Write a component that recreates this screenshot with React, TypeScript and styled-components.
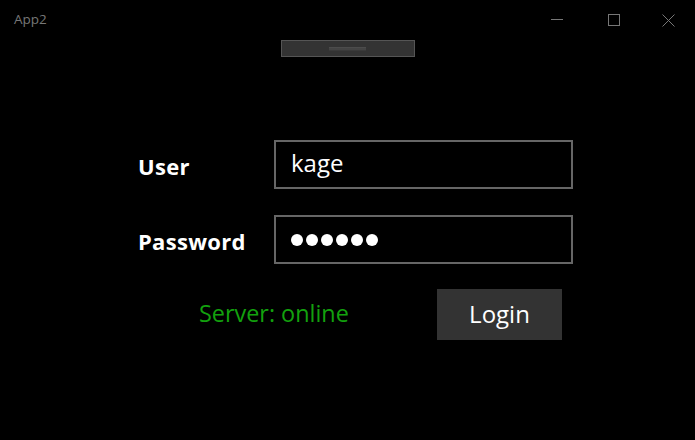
import React from "react";
import styled, { createGlobalStyle } from "styled-components";

const Global = createGlobalStyle`
  html, body { margin: 0; padding: 0; background: #000; }
  body { font-family: "Open Sans", "Noto Sans", sans-serif; }
`;

const Window = styled.div`
  width: 695px;
  height: 440px;
  background: #000;
  display: flex;
  flex-direction: column;
  overflow: hidden;
`;

const TitleBar = styled.div`
  height: 40px;
  display: flex;
  align-items: center;
  padding-left: 14px;
`;

const Title = styled.div`
  flex: 1;
  color: #777;
  font-size: 13.5px;
  line-height: 1;
`;

const Controls = styled.div`
  display: flex;
  align-self: stretch;
`;

const ControlButton = styled.div`
  width: 57px;
  display: flex;
  align-items: center;
  justify-content: center;
  &:last-child {
    width: 53px;
  }
`;

const HandleRow = styled.div`
  display: flex;
  justify-content: center;
`;

const Handle = styled.div`
  width: 132px;
  height: 15px;
  border: 1px solid #555;
  background: #333;
  display: flex;
  align-items: center;
  justify-content: center;
`;

const Grip = styled.div`
  width: 37px;
  height: 2px;
  background: #444;
  border-top: 1px solid #4c4c4c;
  border-bottom: 1px solid #3a3a3a;
`;

const Form = styled.div`
  margin-top: 83px;
  margin-left: 138px;
  display: grid;
  grid-template-columns: 136px 299px;
  row-gap: 26px;
  align-items: center;
`;

const Label = styled.label`
  color: #fff;
  font-weight: 700;
  font-size: 22px;
  letter-spacing: 0.3px;
  line-height: 1;
  margin-top: 2px;
`;

const Field = styled.div`
  box-sizing: border-box;
  height: 49px;
  border: 2px solid #666;
  padding-left: 15px;
  display: flex;
  align-items: center;
  color: #fff;
  font-size: 24px;
  line-height: 1;
  padding-bottom: 3px;
`;

const Dots = styled.span`
  display: flex;
  gap: 3px;
  padding-top: 3px;
`;

const Dot = styled.span`
  width: 12px;
  height: 12px;
  border-radius: 50%;
  background: #fff;
`;

const Footer = styled.div`
  margin-top: 25px;
  margin-left: 199px;
  display: flex;
  align-items: center;
`;

const Status = styled.div`
  width: 238px;
  color: #13a10e;
  font-size: 23.4px;
  line-height: 1;
  padding-bottom: 2px;
`;

const LoginButton = styled.button`
  box-sizing: border-box;
  width: 125px;
  height: 51px;
  border: none;
  background: #333;
  color: #fff;
  font-family: inherit;
  font-size: 24px;
  padding: 0 0 3px;
  cursor: pointer;
`;

export default function App() {
  return (
    <>
      <Global />
      <Window>
        <TitleBar>
          <Title>App2</Title>
          <Controls>
            <ControlButton>
              <svg width="12" height="12" viewBox="0 0 12 12">
                <line x1="0" y1="5.5" x2="12" y2="5.5" stroke="#777" strokeWidth="1" />
              </svg>
            </ControlButton>
            <ControlButton>
              <svg width="12" height="12" viewBox="0 0 12 12">
                <rect x="0.5" y="0.5" width="11" height="11" fill="none" stroke="#777" strokeWidth="1" />
              </svg>
            </ControlButton>
            <ControlButton>
              <svg width="13" height="13" viewBox="0 0 13 13">
                <path d="M0.5 0.5 L12.5 12.5 M12.5 0.5 L0.5 12.5" stroke="#777" strokeWidth="1" />
              </svg>
            </ControlButton>
          </Controls>
        </TitleBar>
        <HandleRow>
          <Handle>
            <Grip />
          </Handle>
        </HandleRow>
        <Form>
          <Label>User</Label>
          <Field>kage</Field>
          <Label>Password</Label>
          <Field>
            <Dots>
              {Array.from({ length: 6 }).map((_, i) => (
                <Dot key={i} />
              ))}
            </Dots>
          </Field>
        </Form>
        <Footer>
          <Status>Server: online</Status>
          <LoginButton>Login</LoginButton>
        </Footer>
      </Window>
    </>
  );
}
